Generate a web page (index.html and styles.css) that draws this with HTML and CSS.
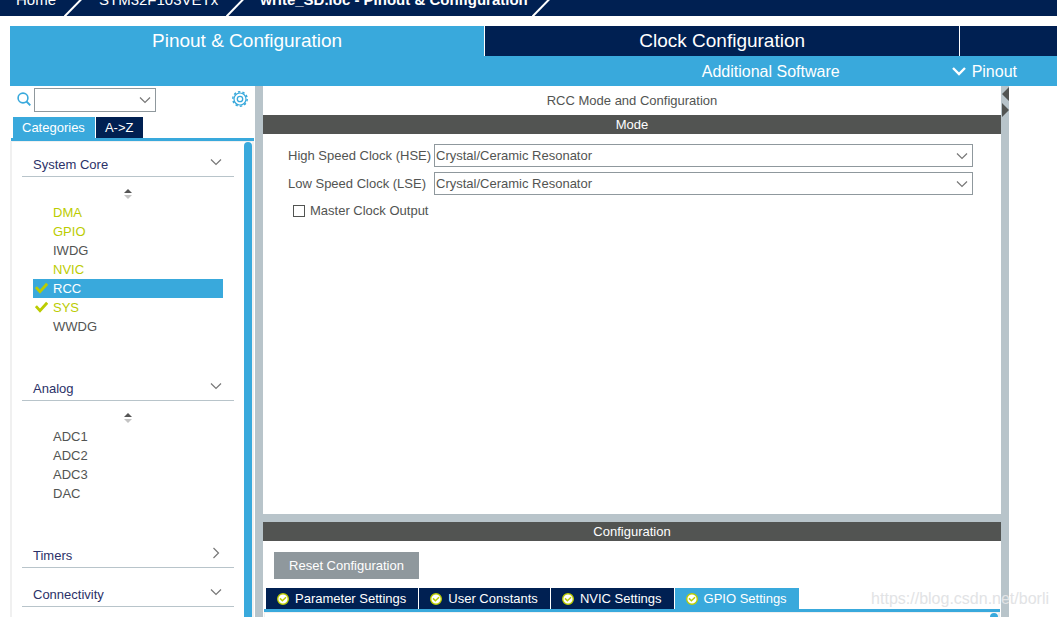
FILE: index.html
```html
<!DOCTYPE html>
<html lang="en">
<head>
<meta charset="utf-8">
<title>write_SD.ioc - Pinout &amp; Configuration</title>
<link rel="stylesheet" href="styles.css">
</head>
<body>
<svg class="defs" aria-hidden="true">
  <symbol id="chev" viewBox="0 0 12 12"><path d="M1 3.5 6 8.5 11 3.5" fill="none" stroke="currentColor" stroke-width="1.2"/></symbol>
  <symbol id="chev-right" viewBox="0 0 12 12"><path d="M3.5 1 8.5 6 3.5 11" fill="none" stroke="currentColor" stroke-width="1.2"/></symbol>
  <symbol id="check" viewBox="0 0 12 12"><path d="M.8 4.8 4.6 9 11.2 1.600" fill="none" stroke="currentColor" stroke-width="2.6"/></symbol>
  <symbol id="ok" viewBox="0 0 12 12"><circle cx="6" cy="6" r="5.300" fill="#fff" stroke="#bbcc01" stroke-width="1.400"/><path d="M3 5.400 5.400 7.800 9 4.300" fill="none" stroke="#bbcc01" stroke-width="1.500"/></symbol>
  <symbol id="sort" viewBox="0 0 8 10"><path d="M0 4 4 0 8 4Z" fill="#555"/><path d="M0 6 4 10 8 6Z" fill="#c4c4c4"/></symbol>
  <symbol id="slash" viewBox="0 0 18 16"><path d="M0 17 17.500 -1" stroke="#fff" stroke-width="2"/></symbol>
</svg>

<nav class="crumbs" aria-label="Breadcrumb">
  <a class="crumb crumb-home" href="#">Home</a><svg class="slash"><use href="#slash"/></svg>
  <a class="crumb crumb-chip" href="#">STM32F103VETx</a><svg class="slash"><use href="#slash"/></svg>
  <a class="crumb crumb-file" href="#">write_SD.ioc - Pinout &amp; Configuration</a><svg class="slash"><use href="#slash"/></svg>
</nav>

<header class="top">
  <div class="views">
    <button class="view view-on">Pinout &amp; Configuration</button>
    <button class="view">Clock Configuration</button>
    <button class="view view-last" aria-label="Project Manager"></button>
  </div>
  <div class="subbar">
    <button class="sub-btn">Additional Software</button>
    <button class="sub-btn"><svg class="sub-chev" viewBox="0 0 14 10"><path d="M1 2 7 8 13 2" fill="none" stroke="#fff" stroke-width="2.400"/></svg>Pinout</button>
  </div>
</header>

<main class="work">
  <aside class="side">
    <div class="search">
      <svg class="search-ico" viewBox="0 0 14 14"><circle cx="6" cy="6" r="4.900" fill="none" stroke="#39a9dc" stroke-width="1.600"/><path d="M9.500 9.500 13.300 13.300" stroke="#39a9dc" stroke-width="1.900"/></svg>
      <span class="pick search-pick"><select class="select" aria-label="Search"><option></option></select><svg class="pick-ico"><use href="#chev"/></svg></span>
      <button class="gear" aria-label="Settings"><svg class="gear-ico" viewBox="0 0 16 16" fill="none" stroke="#39a9dc"><circle cx="8" cy="8" r="7.200" stroke-width="1.500" stroke-dasharray="2.400 2.120"/><circle cx="8" cy="8" r="6" stroke-width="1.200"/><circle cx="8" cy="8" r="2.700" stroke-width="1.300"/></svg></button>
    </div>
    <div class="tabs side-tabs">
      <button class="tab tab-on">Categories</button>
      <button class="tab">A-&gt;Z</button>
    </div>
    <div class="tree">
      <div class="groups">
        <section class="group">
          <button class="group-head">System Core<svg class="ico"><use href="#chev"/></svg></button>
          <div class="group-body">
            <svg class="sort"><use href="#sort"/></svg>
            <ul class="list">
              <li class="item item-set">DMA</li>
              <li class="item item-set">GPIO</li>
              <li class="item">IWDG</li>
              <li class="item item-set">NVIC</li>
              <li class="item item-sel"><svg class="check"><use href="#check"/></svg>RCC</li>
              <li class="item item-set"><svg class="check"><use href="#check"/></svg>SYS</li>
              <li class="item">WWDG</li>
            </ul>
          </div>
        </section>
        <section class="group">
          <button class="group-head">Analog<svg class="ico"><use href="#chev"/></svg></button>
          <div class="group-body">
            <svg class="sort"><use href="#sort"/></svg>
            <ul class="list">
              <li class="item">ADC1</li>
              <li class="item">ADC2</li>
              <li class="item">ADC3</li>
              <li class="item">DAC</li>
            </ul>
          </div>
        </section>
        <section class="group">
          <button class="group-head">Timers<svg class="ico"><use href="#chev-right"/></svg></button>
        </section>
        <section class="group">
          <button class="group-head">Connectivity<svg class="ico"><use href="#chev"/></svg></button>
        </section>
      </div>
      <div class="thumb"></div>
    </div>
  </aside>

  <div class="split"></div>

  <section class="center">
    <h1 class="title">RCC Mode and Configuration</h1>
    <h2 class="bar">Mode</h2>
    <div class="mode">
      <div class="field">
        <label class="field-name" for="hse">High Speed Clock (HSE)</label>
        <span class="pick field-pick"><select class="select" id="hse"><option>Crystal/Ceramic Resonator</option></select><svg class="pick-ico"><use href="#chev"/></svg></span>
      </div>
      <div class="field">
        <label class="field-name" for="lse">Low Speed Clock (LSE)</label>
        <span class="pick field-pick"><select class="select" id="lse"><option>Crystal/Ceramic Resonator</option></select><svg class="pick-ico"><use href="#chev"/></svg></span>
      </div>
      <label class="tick"><input class="box" type="checkbox">Master Clock Output</label>
    </div>
    <div class="hsplit"></div>
    <h2 class="bar">Configuration</h2>
    <div class="config">
      <button class="reset">Reset Configuration</button>
      <div class="tabs cfg-tabs">
        <button class="tab"><svg class="ok"><use href="#ok"/></svg>Parameter Settings</button>
        <button class="tab"><svg class="ok"><use href="#ok"/></svg>User Constants</button>
        <button class="tab"><svg class="ok"><use href="#ok"/></svg>NVIC Settings</button>
        <button class="tab tab-on"><svg class="ok"><use href="#ok"/></svg>GPIO Settings</button>
      </div>
      <div class="cfg-pane"><div class="thumb"></div></div>
    </div>
  </section>

  <div class="split">
    <svg class="arrows" viewBox="0 0 8 32"><path d="M8 1V15L1 8ZM1 17V31L8 24Z" fill="#525452"/></svg>
  </div>
  <div class="right"></div>
</main>
<div class="mark">https://blog.csdn.net/borli</div>
</body>
</html>
```
FILE: styles.css
```css
* { box-sizing: border-box; }

body {
  margin: 0;
  height: 100vh;
  overflow: hidden;
  display: flex;
  flex-direction: column;
  background: #fff;
  color: #525452;
  font: 13px/19px "Liberation Sans", Arial, sans-serif;
}

button, select {
  margin: 0;
  padding: 0;
  border: 0;
  border-radius: 0;
  background: none;
  color: inherit;
  font: inherit;
}

h1, h2, ul { margin: 0; padding: 0; font: inherit; list-style: none; }

svg { display: block; flex: none; }
.defs { position: absolute; width: 0; height: 0; }

.crumbs {
  flex: none;
  display: flex;
  align-items: flex-end;
  height: 16px;
  overflow: hidden;
  background: #002052;
  color: #fff;
}
.crumb {
  padding-bottom: 6px;
  color: inherit;
  font-size: 15px;
  line-height: 20px;
  text-decoration: none;
  white-space: nowrap;
}
.crumb-home { padding-left: 16px; padding-right: 8px; }
.crumb-chip { padding-left: 17px; padding-right: 8px; }
.crumb-file { padding-left: 16px; padding-right: 4px; font-weight: bold; }
.slash { width: 18px; height: 16px; }

.top { flex: none; margin: 10px 0 0 10px; background: #39a9dc; color: #fff; }
.views { display: flex; }
.view {
  flex: 475 1 0;
  height: 30px;
  border-left: 1px solid #fff;
  background: #002052;
  font-size: 19px;
  line-height: 30px;
}
.view-on { border-left: 0; background: #39a9dc; }
.view-last { flex-grow: 97; }
.subbar {
  display: flex;
  justify-content: flex-end;
  gap: 112px;
  height: 30px;
  padding-right: 40px;
  font-size: 16px;
}
.sub-btn { display: flex; align-items: center; gap: 6px; }
.sub-chev { width: 14px; height: 10px; }

.work { flex: 1; min-height: 0; display: flex; padding-left: 10px; }

.side { flex: none; width: 245px; display: flex; flex-direction: column; }
.search { flex: none; display: flex; align-items: flex-start; height: 31px; padding: 2px 7px 0; }
.search-ico { width: 14px; height: 14px; margin: 4px 3px 0 0; }
.pick { display: grid; align-items: center; }
.select {
  grid-area: 1 / 1;
  width: 100%;
  height: 23px;
  padding: 0 24px 0 1px;
  border: 1px solid #8f989d;
  background: #fff;
  appearance: none;
}
.pick-ico { grid-area: 1 / 1; justify-self: end; width: 12px; height: 12px; margin-right: 5px; color: #777; pointer-events: none; }
.search-pick { width: 122px; height: 24px; }
.search-pick .select { height: 24px; }
.gear { margin-left: auto; padding-top: 3px; }
.gear-ico { width: 16px; height: 16px; }

.tabs { flex: none; display: flex; gap: 1px; border-bottom: 3px solid #39a9dc; }
.tab {
  display: flex;
  align-items: center;
  gap: 6px;
  height: 21px;
  padding: 0 12px 0 11px;
  background: #002052;
  color: #fff;
}
.tab-on { background: #39a9dc; }
.side-tabs { margin-left: 1px; padding-left: 2px; margin-right: 1px; }
.side-tabs .tab { padding: 0 10px 0 9px; }

.tree {
  flex: 1;
  min-height: 0;
  display: flex;
  margin-right: 1px;
  border: solid #f0f0f0;
  border-width: 1px 2px 0;
  overflow: hidden;
}
.groups { flex: 1; padding: 3px 10px 0; }
.thumb { flex: none; width: 8px; border-radius: 5px 5px 0 0; background: #39a9dc; }
.group { margin-bottom: 7px; }
.group-head {
  display: flex;
  align-items: center;
  justify-content: space-between;
  width: 100%;
  height: 32px;
  padding: 8px 12px 0 11px;
  border-bottom: 1px solid #b8c4ca;
  color: #2b3168;
}
.ico { width: 12px; height: 12px; margin-bottom: 6px; color: #777; }
.group-body { padding: 12px 11px 26px; }
.sort { width: 8px; height: 10px; margin: 0 auto 4px; }
.list { line-height: 19px; }
.item { position: relative; padding-left: 20px; }
.check { position: absolute; left: 2px; top: 3px; width: 13px; height: 13px; color: #bbcc01; }
.item-set { color: #bbcc01; }
.item-sel { background: #39a9dc; color: #fff; }

.split { flex: none; width: 8px; background: #b8c4ca; }
.arrows { width: 8px; height: 32px; }
.right { flex: none; width: 48px; }

.center { flex: 1; min-width: 0; display: flex; flex-direction: column; }
.title { line-height: 29px; text-align: center; }
.bar { flex: none; background: #525452; color: #fff; text-align: center; line-height: 19px; }
.mode {
  flex: 1;
  min-height: 0;
  display: flex;
  flex-direction: column;
  gap: 5px;
  padding: 10px 28px 0 25px;
}
.field { display: flex; align-items: center; }
.field-name { width: 146px; }
.field-pick { flex: 1; }
.tick { display: flex; align-items: center; gap: 5px; padding: 1px 0 0 5px; }
.box { width: 12px; height: 12px; margin: 0; border: 1px solid #525452; background: #fff; appearance: none; }
.hsplit { flex: none; height: 8px; background: #b8c4ca; }

.config { flex: none; padding: 11px 1px 0; }
.reset {
  display: block;
  width: 145px;
  height: 27px;
  margin: 0 0 9px 10px;
  background: #8f989d;
  color: #fff;
}
.cfg-tabs { padding-left: 2px; }
.ok { width: 12px; height: 12px; }
.cfg-pane {
  display: flex;
  justify-content: flex-end;
  height: 5px;
  border: solid #f0f0f0;
  border-width: 1px 2px 0 1px;
}

.mark {
  position: absolute;
  right: 8px;
  bottom: 8px;
  color: #e2e3e5;
  font-size: 16px;
  line-height: 20px;
}
```
